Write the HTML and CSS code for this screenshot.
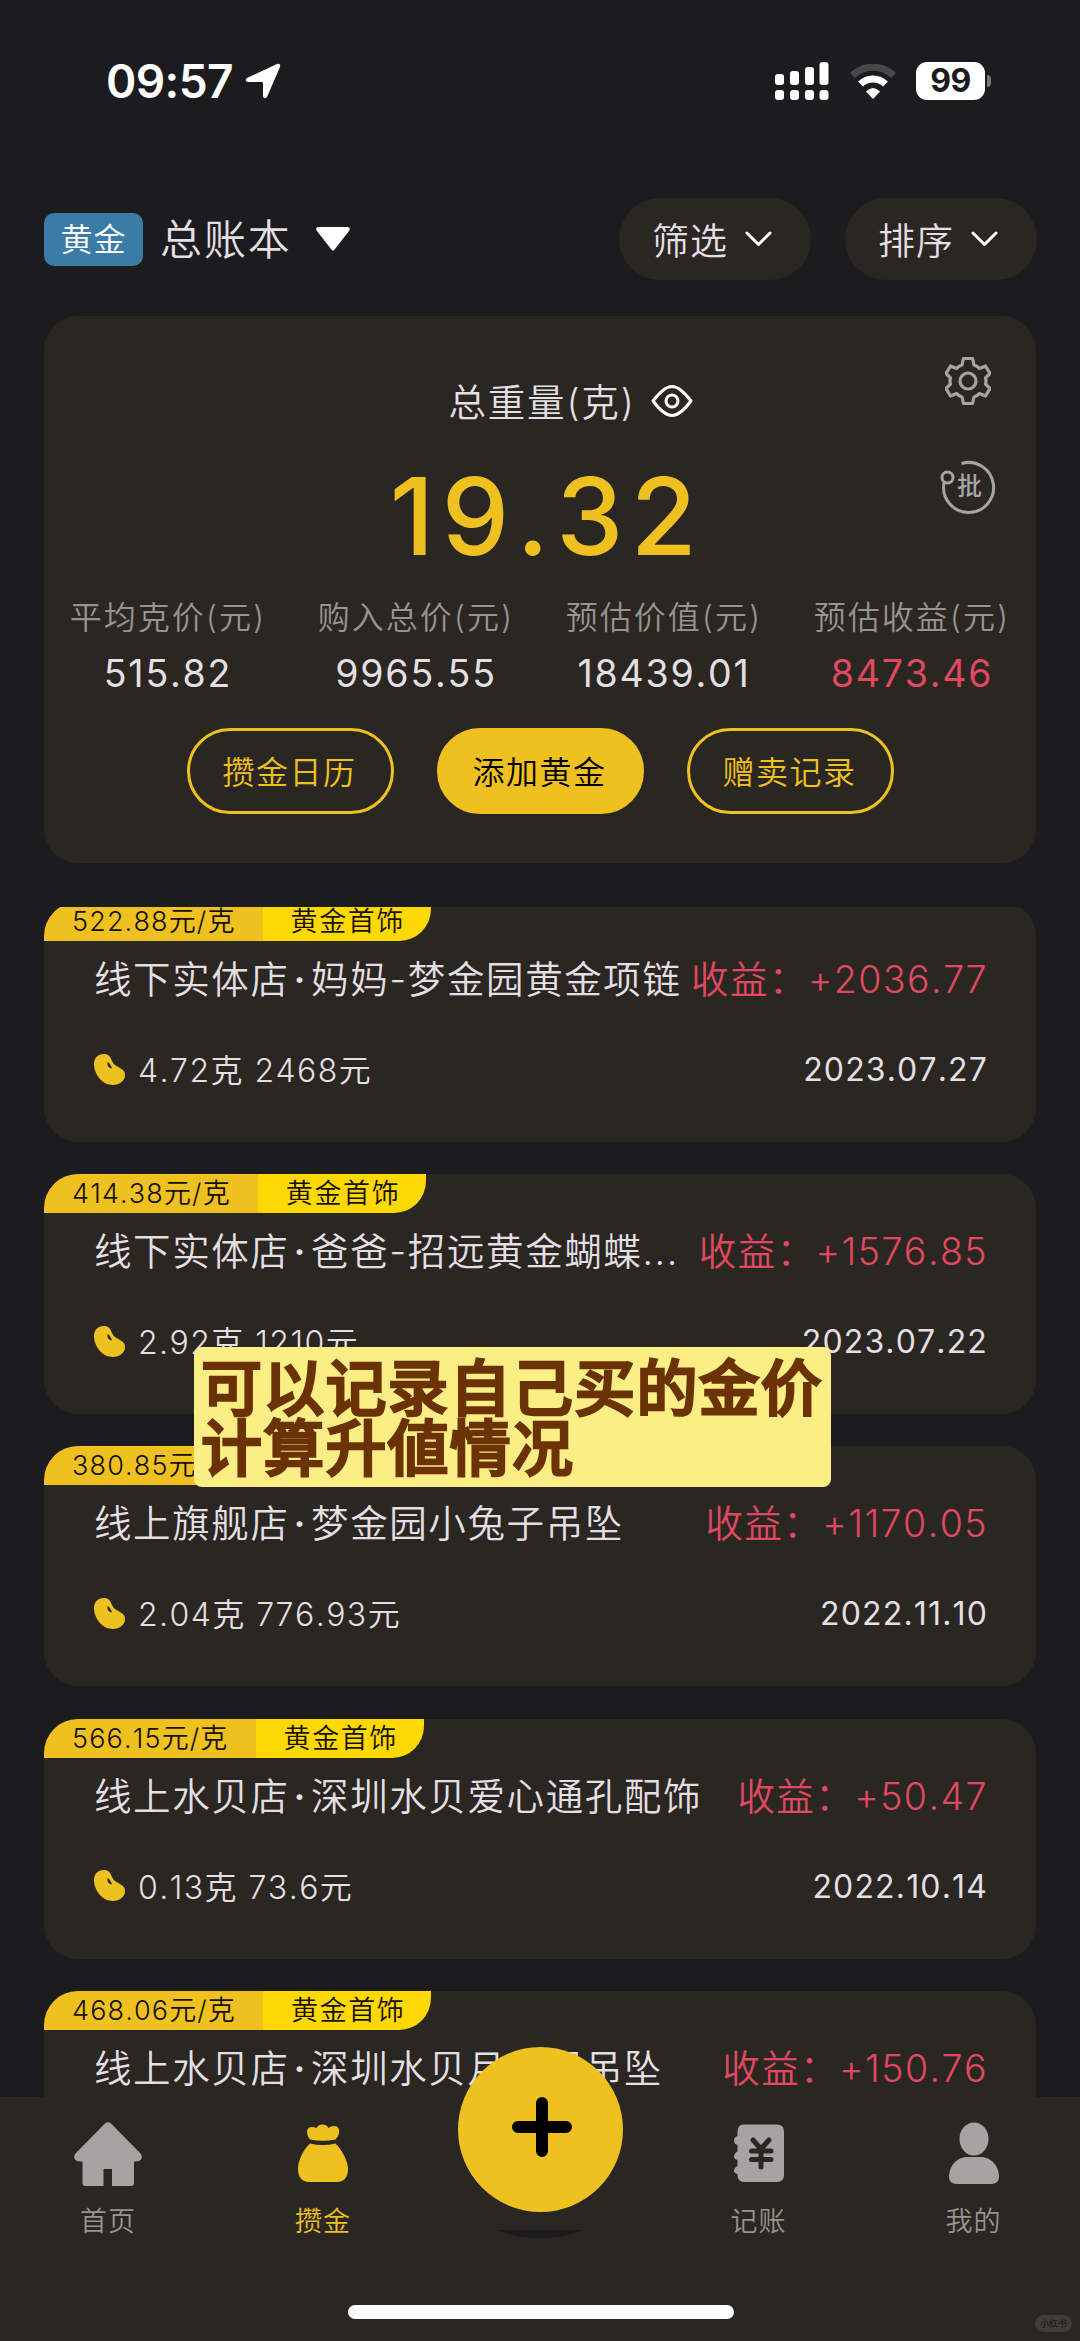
FILE: index.html
```html
<!DOCTYPE html>
<html lang="zh-CN">
<head>
<meta charset="utf-8">
<title>攒金</title>
<link rel="stylesheet" href="styles.css">
</head>
<body>
<svg class="defs" aria-hidden="true">
  <symbol id="chevron" viewBox="0 0 27 16"><path d="M2 2l11.5 11.5L25 2" fill="none" stroke="#fff" stroke-width="3" stroke-linecap="round" stroke-linejoin="round"/></symbol>
  <symbol id="bean" viewBox="0 0 31 31"><path d="M10 0C18 0 16 7 21 11C25 14 31 15 31 21C31 27 25 31 19 31C8 31 0 20 0 10C0 4 4 0 10 0Z" fill="#efc120"/><path d="M13.500 8C13 11.500 14.500 14 18 14.500C17 12 16 9 13.500 8Z" fill="#2a2622"/></symbol>
</svg>
<div class="phone">
  <header class="status">
    <span class="time">09:57</span>
    <svg class="locate" viewBox="0 0 36 36"><path d="M2 15L32 1Q36 0 35 4L22 34Q19 37 18 33V20Q18 19 17 19H3Q-1 18 2 15Z" fill="#fff"/></svg>
    <div class="status-right">
      <svg width="54" height="38" viewBox="0 0 54 38" fill="#fff"><rect x="0" y="12" width="9" height="11" rx="3"/><rect x="15" y="9" width="9" height="14" rx="3"/><rect x="30" y="5" width="9" height="18" rx="3"/><rect x="44.500" y="0" width="9" height="23" rx="3"/><rect x="0" y="28" width="9" height="10" rx="3"/><rect x="15" y="28" width="9" height="10" rx="3"/><rect x="30" y="28" width="9" height="10" rx="3"/><rect x="44.500" y="28" width="9" height="10" rx="3"/></svg>
      <svg class="wifi" width="46" height="35" viewBox="0 0 46 35"><path d="M2.500 11.500A29.500 29.500 0 0 1 43.500 11.500" fill="none" stroke="#48484a" stroke-width="7"/><path d="M10.500 20A18 18 0 0 1 35.500 20" fill="none" stroke="#fff" stroke-width="7"/><path d="M16 27.500Q23 20.500 30 27.500L24 34Q23 35 22 34Z" fill="#fff"/></svg>
      <span class="battery">99</span><span class="battery-cap"></span>
    </div>
  </header>

  <div class="toolbar">
    <span class="metal">黄金</span>
    <span class="book">总账本</span>
    <svg class="caret" viewBox="0 0 34 24"><path d="M2 0H32Q35 1 33 4L19 22Q17 25 15 22L1 4Q-1 1 2 0Z" fill="#fff"/></svg>
    <div class="pills">
      <button class="pill">筛选<svg><use href="#chevron"/></svg></button>
      <button class="pill">排序<svg><use href="#chevron"/></svg></button>
    </div>
  </div>

  <section class="summary">
    <div class="tools">
      <svg width="46" height="48" viewBox="-23 -24 46 48" fill="none" stroke="#a5a4a2" stroke-width="3.200" stroke-linejoin="round"><path d="M-4.500 -22.500H4.500L6 -16Q9 -15 11.500 -12.500L17.500 -15L22 -7.500L17.500 -3Q18.500 0 17.500 3L22 7.500L17.500 15L11.500 12.500Q9 15 6 16L4.500 22.500H-4.500L-6 16Q-9 15 -11.500 12.500L-17.500 15L-22 7.500L-17.500 3Q-18.500 0 -17.500 -3L-22 -7.500L-17.500 -15L-11.500 -12.500Q-9 -15 -6 -16Z"/><circle r="8"/></svg>
      <div class="batch"><svg width="56" height="54" viewBox="0 0 56 54" fill="none" stroke="#a5a4a2" stroke-width="3"><path d="M21.500 3.500A25 25 0 1 1 4 23"/><circle cx="7.500" cy="17.500" r="5.500"/></svg><span>批</span></div>
    </div>
    <div class="weight-label">总重量(克)<svg width="42" height="32" viewBox="0 0 42 32" fill="none" stroke="#fff" stroke-width="3"><path d="M2 16C8 8 14 1.500 21 1.500S34 8 40 16C34 24 28 30.500 21 30.500S8 24 2 16Z" stroke-linejoin="round"/><circle cx="21" cy="16" r="6"/></svg></div>
    <div class="weight">19.32</div>
    <div class="stats">
      <div><span>平均克价(元)</span><b>515.82</b></div>
      <div><span>购入总价(元)</span><b>9965.55</b></div>
      <div><span>预估价值(元)</span><b>18439.01</b></div>
      <div><span>预估收益(元)</span><b class="red">8473.46</b></div>
    </div>
    <div class="actions">
      <button>攒金日历</button>
      <button class="primary">添加黄金</button>
      <button>赠卖记录</button>
    </div>
  </section>

  <main class="list">
    <div class="records">
    <article class="record">
      <div class="tags"><span>522.88元/克</span><span>黄金首饰</span></div>
      <div class="line name"><span>线下实体店<i>·</i>妈妈-梦金园黄金项链</span><em>收益：+2036.77</em></div>
      <div class="line meta"><svg><use href="#bean"/></svg><span>4.72克 2468元</span><time>2023.07.27</time></div>
    </article>
    <article class="record">
      <div class="tags"><span>414.38元/克</span><span>黄金首饰</span></div>
      <div class="line name"><span>线下实体店<i>·</i>爸爸-招远黄金蝴蝶...</span><em>收益：+1576.85</em></div>
      <div class="line meta"><svg><use href="#bean"/></svg><span>2.92克 1210元</span><time>2023.07.22</time></div>
    </article>
    <article class="record">
      <div class="tags"><span>380.85元/克</span><span>黄金首饰</span></div>
      <div class="line name"><span>线上旗舰店<i>·</i>梦金园小兔子吊坠</span><em>收益：+1170.05</em></div>
      <div class="line meta"><svg><use href="#bean"/></svg><span>2.04克 776.93元</span><time>2022.11.10</time></div>
    </article>
    <article class="record">
      <div class="tags"><span>566.15元/克</span><span>黄金首饰</span></div>
      <div class="line name"><span>线上水贝店<i>·</i>深圳水贝爱心通孔配饰</span><em>收益：+50.47</em></div>
      <div class="line meta"><svg><use href="#bean"/></svg><span>0.13克 73.6元</span><time>2022.10.14</time></div>
    </article>
    <article class="record">
      <div class="tags"><span>468.06元/克</span><span>黄金首饰</span></div>
      <div class="line name"><span>线上水贝店<i>·</i>深圳水贝月亮船吊坠</span><em>收益：+150.76</em></div>
    </article>
    </div>
  </main>

  <nav class="tabs">
    <a class="tab"><svg width="68" height="64" viewBox="0 0 68 64" fill="#a5a4a2"><path d="M31 1.500Q34 -1 37 1.500L66 31Q69 34 67 37.500Q65.500 39.500 62 39.500H60V61Q60 64 57 64H38V47H29.500V64H11Q8.500 64 8.500 61V39.500H6Q2.500 39.500 1 37.500Q-1 34 2 31Z"/></svg><span>首页</span></a>
    <a class="tab on"><svg width="50" height="64" viewBox="0 0 50 64" fill="#efc120"><path d="M12 17.500C9 14 8 8 10.500 6Q14 4 18.500 6Q20 2.500 24.500 2.500T30.500 6Q34 3 39 4.500C43 8 41 14 37.500 17.500Q25 20 12 17.500Z"/><path d="M12 21.500Q25 24.500 37.500 21.500C43 27 50 38 50 47C50 55 46 60 39 60H11C4 60 0 55 0 47C0 38 6 27 12 21.500Z"/></svg><span>攒金</span></a>
    <a class="tab"></a>
    <a class="tab book-tab"><svg width="50" height="64" viewBox="0 0 50 64"><path d="M10 2.500H43Q50 2.500 50 9.500V53Q50 60 43 60H10Q3.500 60 3.500 53V52Q0 51 0 48.500T3.500 44V38Q0 37 0 34.500T3.500 29V23Q0 22 0 18.500T3.500 14V9.500Q3.500 2.500 10 2.500Z" fill="#a5a4a2"/><path d="M19 18L27 27L35 18M27 27V45M17.500 29H37M17.500 37.500H37" fill="none" stroke="#2a2622" stroke-width="5" stroke-linecap="round"/></svg><span>记账</span></a>
    <a class="tab me-tab"><svg width="50" height="64" viewBox="0 0 50 64" fill="#a5a4a2"><ellipse cx="25" cy="17" rx="14.500" ry="16.500"/><path d="M18 35H32C42 35 50 44 50 55Q50 62 42 62H8Q0 62 0 55C0 44 8 35 18 35Z"/></svg><span>我的</span></a>
    <svg class="notch" viewBox="0 0 88 8"><path d="M0 0H88Q68 8 44 8T0 0Z" fill="#1c1c1e"/></svg>
    <button class="fab"><svg width="60" height="60" viewBox="0 0 60 60"><path d="M30 6V54M6 30H54" stroke="#000" stroke-width="12" stroke-linecap="round"/></svg></button>
    <div class="home-bar"></div>
    <span class="mark">小红书</span>
  </nav>
  <div class="caption">可以记录自己买的金价<br>计算升値情况</div>
</div>
</body>
</html>
```
FILE: styles.css
```css
* { box-sizing: border-box; }
body { margin: 0; background: #1c1c1e; }
button { border: 0; padding: 0; font: inherit; letter-spacing: inherit; color: inherit; }
em, i, b { font-style: normal; font-weight: inherit; }
svg { display: block; flex: none; }
.defs { position: absolute; width: 0; height: 0; }
.phone {
  position: relative; width: 1080px; height: 2341px; overflow: hidden;
  display: flex; flex-direction: column; background: #1c1c1e; color: #e4dfe3;
  font-family: Inter, "Noto Sans CJK SC", sans-serif; font-weight: 350; font-kerning: none;
  letter-spacing: 1px; white-space: nowrap;
}
.status { display: flex; align-items: center; height: 162px; padding: 0 89px 0 106px; color: #fff; }
.time { font-size: 46px; font-weight: 600; letter-spacing: -.6px; line-height: 60px; }
.locate { width: 36px; height: 36px; margin-left: 12px; }
.status-right { display: flex; align-items: center; margin-left: auto; }
.wifi { margin-left: 21px; }
.battery {
  width: 69px; height: 38px; margin-left: 20px; border-radius: 11px; background: #fff; color: #1c1c1e;
  font-size: 32px; font-weight: 700; line-height: 38px; text-align: center; letter-spacing: -.5px;
}
.battery-cap { width: 4px; height: 12px; margin-left: 2px; border-radius: 0 4px 4px 0; background: #77777a; }

.toolbar { display: flex; align-items: center; height: 154px; padding: 0 43px 0 44px; }
.metal {
  width: 99px; height: 53px; border-radius: 10px; background: #3a7ca5; color: #fff;
  font-size: 32px; line-height: 53px; text-align: center;
}
.book { margin-left: 17px; font-size: 42px; line-height: 60px; letter-spacing: 1.900px; padding-top: 1px; }
.caret { width: 34px; height: 24px; margin-left: 24px; }
.pills { display: flex; gap: 34px; margin-left: auto; }
.pill {
  display: flex; align-items: center; width: 192px; height: 82px; padding-left: 33px;
  border-radius: 41px; background: #2a2622; font-size: 37px;
}
.pill svg { width: 27px; height: 16px; margin-left: 17px; }

.summary {
  position: relative; flex: none; height: 547px; margin: 0 44px; padding-top: 54px;
  border-radius: 34px; background: #2a2622;
}
.tools { position: absolute; top: 41px; right: 40px; display: flex; flex-direction: column; align-items: flex-end; gap: 55px; }
.tools > svg { margin-right: 5px; }
.batch { position: relative; }
.batch span { position: absolute; left: 17px; top: 11px; font-size: 25px; line-height: 30px; font-weight: 500; letter-spacing: 0; color: #a5a4a2; }
.weight-label { display: flex; justify-content: center; align-items: center; gap: 15px; height: 58px; padding-left: 61px; font-size: 37.500px; letter-spacing: 1.850px; }
.weight-label svg { margin-top: 4px; }
.weight { height: 158px; padding-left: 14px; text-align: center; font-size: 107px; font-weight: 500; line-height: 177px; letter-spacing: 7.400px; color: #efc120; }
.stats { display: grid; grid-template-columns: repeat(4, 1fr); text-align: center; margin-top: 9px; }
.stats div { display: flex; flex-direction: column; }
.stats span { font-size: 32px; line-height: 46px; color: #97938f; letter-spacing: 2.050px; }
.stats b { font-size: 37.500px; font-weight: 400; line-height: 46px; margin-top: 10px; letter-spacing: 1.800px; }
.stats .red, .name em { color: #e0495f; }
.actions { display: flex; justify-content: center; gap: 43px; margin-top: 31px; }
.actions button {
  width: 207px; height: 86px; border: 3px solid #efc120; border-radius: 43px; background: none;
  color: #efc120; font-size: 32px; padding: 0 1px 2px 0; letter-spacing: 1.500px;
}
.actions .primary { background: #efc120; color: #000; }

.list { flex: 1; min-height: 0; margin-top: 44px; padding: 0 44px; overflow: hidden; }
.records { display: flex; flex-direction: column; gap: 32.200px; margin-top: -5px; }
.record { flex: none; height: 240px; border-radius: 34px; background: #2a2622; overflow: hidden; }
.tags { display: flex; height: 39px; font-size: 27px; line-height: 40px; color: #15110a; letter-spacing: 1.150px; }
.tags span { padding: 0 27px 0 28px; background: #efc120; }
.tags span + span { padding-right: 26px; background: #fdd802; border-bottom-right-radius: 32px; letter-spacing: 1.600px; }
.line { display: flex; align-items: center; padding: 0 48px 0 50px; }
.name { height: 76px; padding-bottom: 5px; font-size: 37.500px; letter-spacing: 1.600px; }
.name i { padding: 0 4px; font-weight: 600; }
.name em { letter-spacing: 1.450px; }
.name em, .meta time { margin-left: auto; }
.meta { height: 60px; margin-top: 23px; font-size: 32px; letter-spacing: 1.450px; }
.meta span { padding-bottom: 4px; }
.meta time { padding-bottom: 1px; font-weight: 400; letter-spacing: 1.150px; }
.meta svg { width: 31px; height: 31px; margin-right: 13px; margin-top: -2px; }

.tabs { position: relative; flex: none; height: 244px; display: grid; grid-template-columns: repeat(5, 1fr); background: #2a2622; }
.tab { display: flex; flex-direction: column; align-items: center; padding-top: 25px; color: #97938f; font-size: 27px; }
.tab span { margin-top: 17px; line-height: 38px; }
.tab.on { color: #efc120; padding-right: 2px; }
.book-tab { padding-left: 5px; }
.me-tab { padding-left: 3px; }
.fab {
  position: absolute; left: 458px; top: -50px; width: 165px; height: 165px; border-radius: 50%;
  background: #efc120; display: flex; align-items: center; justify-content: center;
}
.fab svg { margin: -5px 0 0 2px; }
.notch { position: absolute; left: 496px; top: 133px; width: 88px; height: 8px; }
.home-bar { position: absolute; left: 348px; top: 208px; width: 386px; height: 14px; border-radius: 7px; background: #fff; }
.mark {
  position: absolute; left: 1035px; top: 218px; width: 37px; height: 17px; border-radius: 9px;
  background: #403d39; color: #23201d; font-size: 9px; font-weight: 700; line-height: 17px; text-align: center; letter-spacing: 0;
}
.caption {
  position: absolute; left: 194px; top: 1347px; width: 637px; height: 140px; padding: 12px 0 0 7px;
  border-radius: 8px; background: #faee85; color: #6b3206; font-size: 61px; line-height: 60px; font-weight: 500;
  letter-spacing: 1.200px; -webkit-text-stroke: 2.500px #6b3206; stroke-linejoin: round;
}
```
